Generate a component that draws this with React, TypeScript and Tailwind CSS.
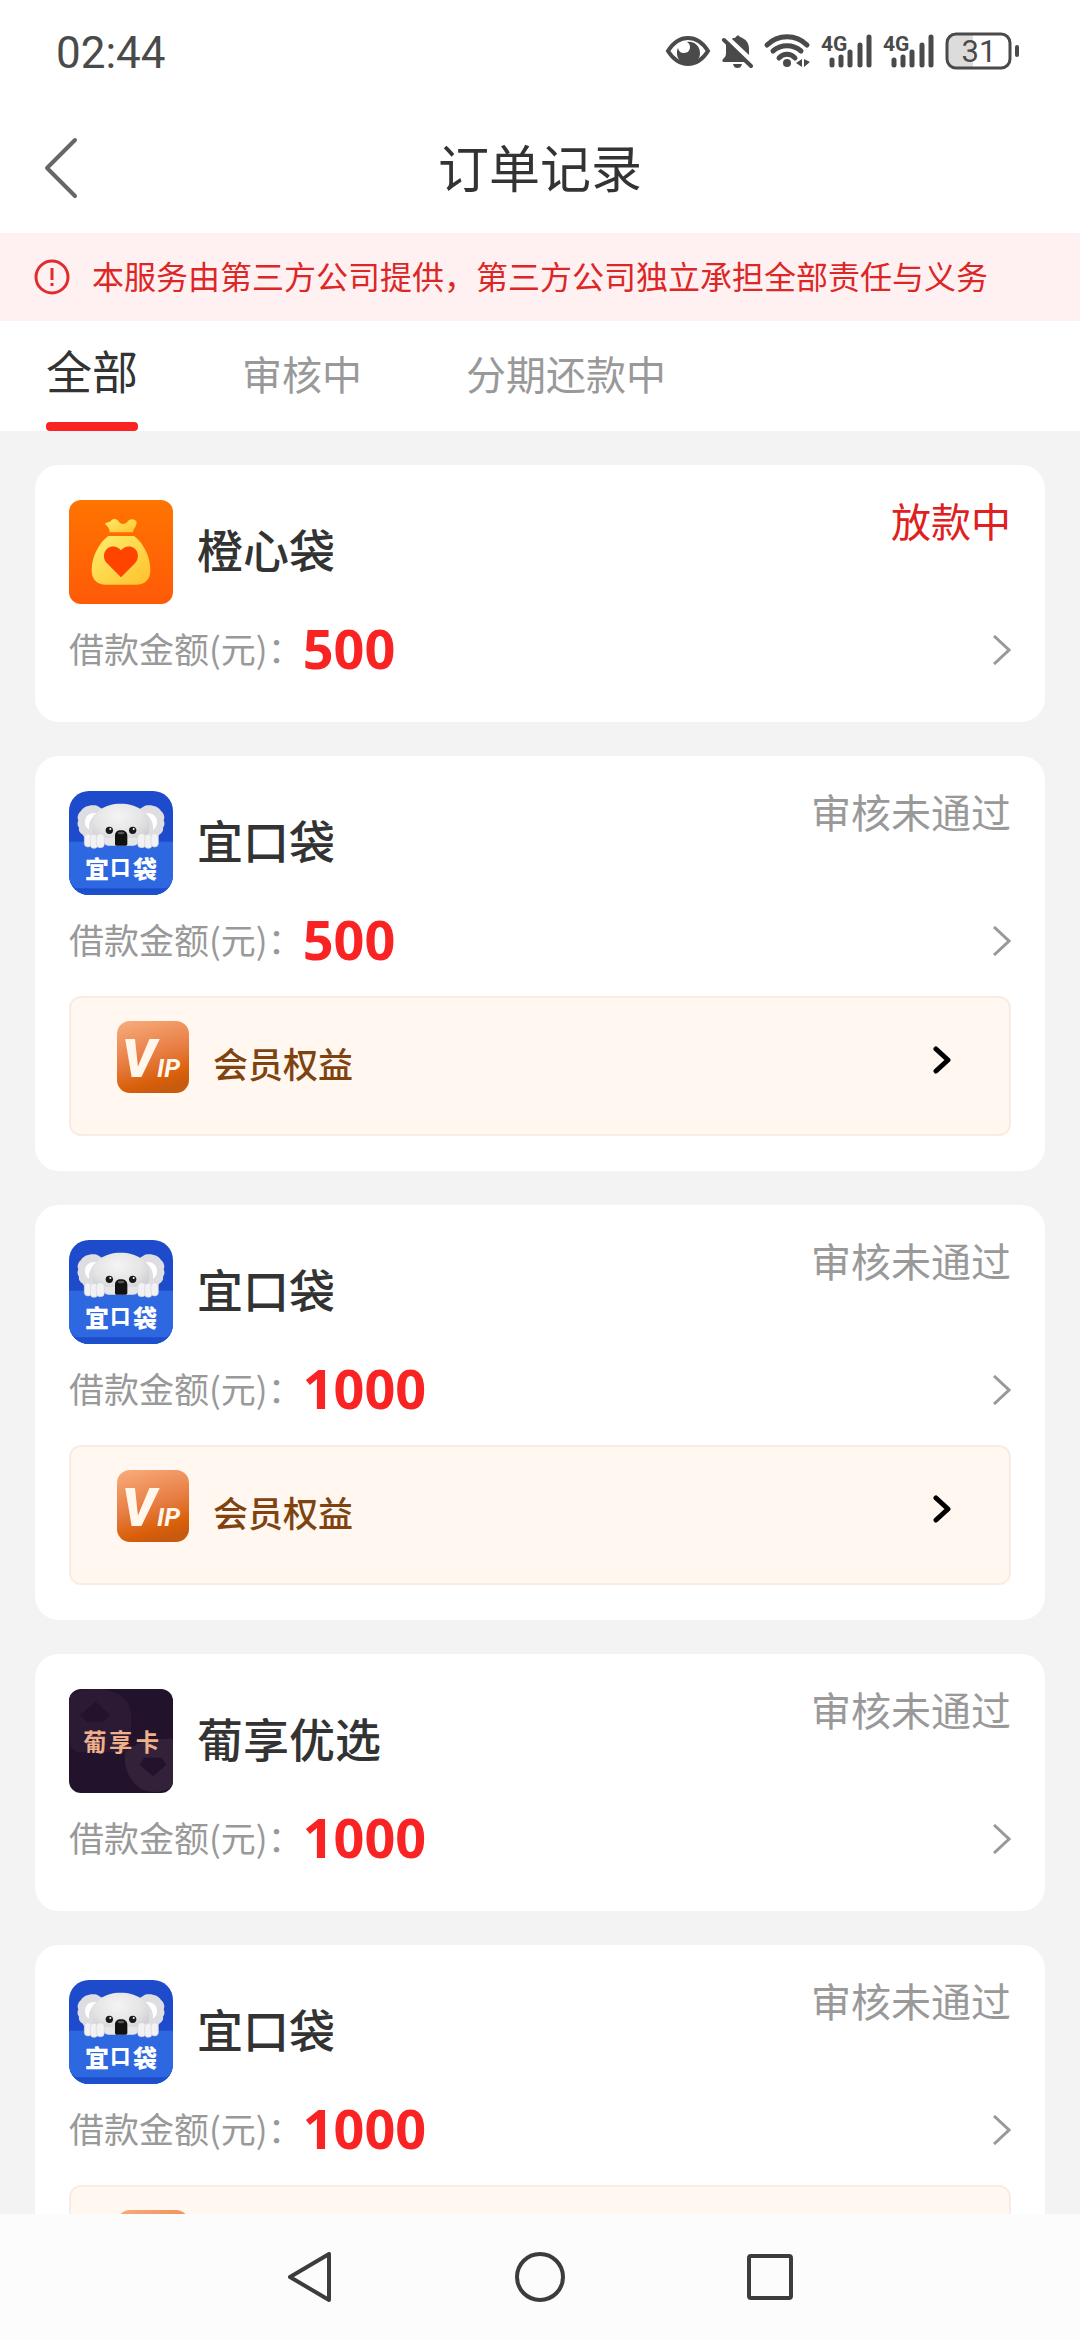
import { useState } from 'react';
import clsx from 'clsx';

type Order = {
  name: string;
  logo: 'bag' | 'koala' | 'card';
  amount: number;
  status: string;
  active?: boolean;
  vip?: boolean;
};

const tabs = ['全部', '审核中', '分期还款中'];

const orders: Order[] = [
  { name: '橙心袋', logo: 'bag', amount: 500, status: '放款中', active: true },
  { name: '宜口袋', logo: 'koala', amount: 500, status: '审核未通过', vip: true },
  { name: '宜口袋', logo: 'koala', amount: 1000, status: '审核未通过', vip: true },
  { name: '葡享优选', logo: 'card', amount: 1000, status: '审核未通过' },
  { name: '宜口袋', logo: 'koala', amount: 1000, status: '审核未通过', vip: true },
];

const SignalIcon = () => (
  <svg viewBox="0 0 52 38" className="w-[52px] h-[38px]" fill="none" stroke="#4a4a4a">
    <text x="0" y="19" fontSize="21" fontWeight="700" fill="#4a4a4a" stroke="none" fontFamily="Roboto, sans-serif">4G</text>
    <path d="M11 28v5M20 25v8M29 20v13M39 13v20M48 5v28" strokeWidth="5" strokeLinecap="round" />
  </svg>
);

const StatusBar = () => (
  <div className="flex h-[102px] shrink-0 items-center justify-between px-[60px] pl-14 text-[#4a4a4a]">
    <span className="pt-1 font-['Roboto',sans-serif] text-[44px] leading-none">02:44</span>
    <div className="flex items-center gap-[10px]">
      <svg viewBox="0 0 46 38" className="w-[46px] h-[38px]">
        <path d="M3 19C8 11 15 6 23 6s15 5 20 13c-5 8-12 13-20 13S8 27 3 19Z" fill="none" stroke="#4a4a4a" strokeWidth="4" />
        <path d="M22 10c7-1 13 4 13 11s-5 11-12 11-11-5-11-11c0-2 0-3 1-5 1 4 3 5 6 5 4 0 6-3 6-6 0-2-1-4-3-5Z" fill="#4a4a4a" />
      </svg>
      <svg viewBox="0 0 32 38" className="w-[32px] h-[38px]" fill="#4a4a4a">
        <path d="M12 6c1 0 2 0 3-1 1-2 3-2 4 0 6 2 9 6 9 12v6L11 7Z" />
        <path d="M5 11 24 30H3c-2 0-2-2-1-3 2-2 3-3 3-6Z" />
        <path d="M12 32h9c-1 3-2 4-4.500 4S13 35 12 32Z" />
        <path d="m3 8 27 26" stroke="#4a4a4a" strokeWidth="4" strokeLinecap="round" />
      </svg>
      <svg viewBox="0 0 48 38" className="w-[48px] h-[38px]" fill="none" stroke="#4a4a4a" strokeWidth="5" strokeLinecap="round">
        <path d="M4 13C15 2 33 2 44 13M10 19c8-7 20-7 28 0M16 26c4-5 12-5 16 0" />
        <circle cx="24" cy="31" r="4" fill="#4a4a4a" stroke="none" />
        <path d="M39 27v8l-6-4ZM41 27v8l6-5Z" fill="#4a4a4a" stroke="none" />
      </svg>
      <SignalIcon />
      <SignalIcon />
      <svg viewBox="0 0 75 38" className="w-[75px] h-[38px]">
        <path d="M11 2h17v34H11c-6 0-9-3-9-8V10c0-5 3-8 9-8Z" fill="#dcdcdc" />
        <rect x="2" y="2" width="63" height="34" rx="9" fill="none" stroke="#4a4a4a" strokeWidth="3" />
        <rect x="70" y="13" width="4" height="12" rx="2" fill="#4a4a4a" />
        <text x="34" y="30" fontSize="31" textAnchor="middle" fill="#4a4a4a" fontFamily="Roboto, sans-serif">31</text>
      </svg>
    </div>
  </div>
);

const BagLogo = () => (
  <svg viewBox="0 0 312 312" className="size-[104px] rounded-[12px]">
    <defs>
      <linearGradient id="bagBg" x1="0" y1="0" x2="0" y2="1">
        <stop offset="0" stopColor="#ff7400" />
        <stop offset="1" stopColor="#ff5a08" />
      </linearGradient>
      <linearGradient id="bagFill" x1="0" y1="0" x2="1" y2="1">
        <stop offset="0" stopColor="#ffee6e" />
        <stop offset="1" stopColor="#ffc02a" />
      </linearGradient>
    </defs>
    <rect width="312" height="312" fill="url(#bagBg)" />
    <path d="M122 97c0-12-6-18-14-25 6-7 16-4 20-12 6-5 18-3 22 6 6 8 18 8 25 0 5-10 21-11 27-2 4 12-8 20-10 33Z" fill="url(#bagFill)" />
    <path d="M118 108h77c30 22 49 64 49 102 0 30-16 44-44 44h-88c-28 0-44-14-44-44 0-38 20-80 50-102Z" fill="url(#bagFill)" />
    <path d="m156 232-42-42c-14-14-11-35 2-45 13-9 30-6 40 6 10-12 27-15 40-6 13 10 15 31 2 45Z" fill="#ff4400" />
  </svg>
);

const KoalaLogo = () => (
  <svg viewBox="0 0 312 312" className="size-[104px] rounded-[20px]">
    <defs>
      <radialGradient id="koalaHead" cx=".45" cy=".3" r=".7">
        <stop offset="0" stopColor="#f4f4f4" />
        <stop offset=".6" stopColor="#e4e4e4" />
        <stop offset="1" stopColor="#cbcbcf" />
      </radialGradient>
    </defs>
    <rect width="312" height="312" fill="#1d4bcb" />
    <path d="M84 44c-22-4-42 4-48 16-10 8-12 20-8 28-4 8-3 16 2 22-2 10 4 16 10 20 4 10 16 16 26 14l40-8V58Z" fill="#dedee2" />
    <path d="M228 44c22-4 42 4 48 16 10 8 12 20 8 28 4 8 3 16-2 22 2 10-4 16-10 20-4 10-16 16-26 14l-40-8V58Z" fill="#dedee2" />
    <path d="M82 66c-18-2-34 8-34 26 0 12 4 18 12 24-2-22 8-36 22-50ZM230 66c18-2 34 8 34 26 0 12-4 18-12 24 2-22-8-36-22-50Z" fill="#fff" />
    <path d="M155 38c48 0 84 24 86 62 1 26-8 46-20 64H90c-12-18-21-38-20-64 2-38 37-62 85-62Z" fill="url(#koalaHead)" />
    <rect y="152" width="312" height="140" fill="#2d68e0" />
    <path d="M0 262c6 24 20 36 48 36h216c28 0 42-12 48-36v50H0Z" fill="#1c50cc" />
    <path d="M104 140h104v10c0 8-6 14-14 14h-76c-8 0-14-6-14-14Z" fill="#e6e6e9" />
    <g fill="#f2f2f4" stroke="#d4d4da" strokeWidth="2">
      <rect x="46" y="128" width="22" height="40" rx="11" />
      <rect x="64" y="130" width="22" height="42" rx="11" />
      <rect x="82" y="128" width="24" height="42" rx="11" />
      <rect x="206" y="128" width="24" height="42" rx="11" />
      <rect x="227" y="130" width="22" height="42" rx="11" />
      <rect x="246" y="128" width="22" height="40" rx="11" />
    </g>
    <circle cx="121" cy="118" r="11" fill="#1a1a1a" />
    <circle cx="191" cy="118" r="11" fill="#1a1a1a" />
    <circle cx="124" cy="114" r="3" fill="#fff" />
    <circle cx="194" cy="114" r="3" fill="#fff" />
    <path d="M138 134c0-10 6-16 18-16s19 6 19 16v24c0 4-3 6-6 6h-25c-4 0-6-2-6-6Z" fill="#111" />
    <ellipse cx="156" cy="126" rx="10" ry="4" fill="#555" />
    <g fill="#fff" fontFamily="'Noto Sans CJK SC', sans-serif" fontWeight="900">
      <text x="48" y="260" fontSize="72">宜</text>
      <text x="124" y="252" fontSize="60">口</text>
      <text x="192" y="260" fontSize="72">袋</text>
    </g>
  </svg>
);

const CardLogo = () => (
  <svg viewBox="0 0 312 312" className="size-[104px] rounded-[12px]">
    <rect width="312" height="312" fill="#22122b" />
    <path d="M0 20C60-14 150-10 180 50c14 36 6 90-10 140H30C10 186 2 170 0 150Z" fill="#2c1a34" />
    <path d="m80 38 42 40-20 20H54L34 78Z" fill="#22122b" />
    <path d="M312 150v140c-30 22-70 26-100 6-34-24-48-60-44-106 30-30 90-44 144-40Z" fill="#33213a" />
    <path d="m252 262-40-34 14-22h52l14 22Z" fill="#22122b" />
    <g fill="#efb08c" fontFamily="'Noto Sans CJK SC', sans-serif" fontWeight="700" fontSize="70">
      <text x="43" y="186">葡</text>
      <text x="120" y="186">享</text>
      <text x="200" y="186">卡</text>
    </g>
  </svg>
);

const VipLogo = () => (
  <svg viewBox="0 0 216 216" className="size-[72px] rounded-[13px]">
    <defs>
      <linearGradient id="vipBg" x1=".2" y1="0" x2=".5" y2="1">
        <stop offset="0" stopColor="#f7a878" />
        <stop offset=".5" stopColor="#e87f45" />
        <stop offset=".85" stopColor="#d95f0a" />
        <stop offset="1" stopColor="#c85a10" />
      </linearGradient>
    </defs>
    <rect width="216" height="216" fill="url(#vipBg)" />
    <g fill="#fff6ec" fontFamily="Roboto, sans-serif" fontStyle="italic">
      <text x="14" y="168" fontSize="160" fontWeight="900">V</text>
      <text x="120" y="168" fontSize="76" fontWeight="700">IP</text>
    </g>
  </svg>
);

const logos = { bag: BagLogo, koala: KoalaLogo, card: CardLogo };

const OrderCard = ({ order }: { order: Order }) => {
  const Logo = logos[order.logo];
  return (
    <article className="shrink-0 rounded-[24px] bg-white px-[34px] py-[35px]">
      <div className="flex items-start justify-between">
        <div className="flex items-start gap-6">
          <Logo />
          <h2 className="pt-5 text-[46px] leading-[56px] font-medium text-[#333]">{order.name}</h2>
        </div>
        <span className={clsx('text-[40px] leading-[40px]', order.active ? 'text-[#e02020]' : 'text-[#999]')}>
          {order.status}
        </span>
      </div>
      <button type="button" className="flex h-[83px] w-full items-center justify-between pt-2">
        <span className="flex items-center pb-1">
          <span className="text-[35px] leading-[52px] text-[#999]">借款金额(元)：</span>
          <span className="font-['Noto_Sans',sans-serif] text-[54px] leading-[52px] font-bold text-[#fa2323]">{order.amount}</span>
        </span>
        <svg viewBox="0 0 18 30" className="w-[18px] h-[30px]" fill="none" stroke="#999" strokeWidth="3">
          <path d="m1 1 15 14L1 29" />
        </svg>
      </button>
      {order.vip && (
        <button
          type="button"
          className="mt-[18px] flex h-[140px] w-full items-start justify-between rounded-[12px] border-2 border-[#faece2] bg-[#fff7f0] pt-[23px] pr-[58px] pl-[46px]"
        >
          <span className="flex items-end gap-6">
            <VipLogo />
            <span className="text-[35px] leading-[60px] font-medium text-[#7f4310]">会员权益</span>
          </span>
          <svg viewBox="0 0 18 76" className="h-[76px] w-[18px]" fill="none" stroke="#000" strokeWidth="5" strokeLinecap="round" strokeLinejoin="round">
            <path d="m3 28 12 11L3 50" />
          </svg>
        </button>
      )}
    </article>
  );
};

const NavBar = () => (
  <nav className="flex h-[126px] shrink-0 items-center justify-center gap-[180px] bg-[#fcfcfc]">
    <button type="button" aria-label="返回">
      <svg viewBox="0 0 50 50" className="size-[50px]" fill="none" stroke="#3c3c3c" strokeWidth="4" strokeLinejoin="round">
        <path d="M44 2v46L5 25Z" />
      </svg>
    </button>
    <button type="button" aria-label="主页">
      <svg viewBox="0 0 50 50" className="size-[50px]" fill="none" stroke="#3c3c3c" strokeWidth="4">
        <circle cx="25" cy="25" r="23" />
      </svg>
    </button>
    <button type="button" aria-label="最近任务">
      <svg viewBox="0 0 50 50" className="size-[50px]" fill="none" stroke="#3c3c3c" strokeWidth="4">
        <rect x="4" y="4" width="42" height="42" rx="2" />
      </svg>
    </button>
  </nav>
);

export default function App() {
  const [tab, setTab] = useState(0);

  return (
    <div className="flex h-screen flex-col overflow-hidden bg-white font-['Noto_Sans_CJK_SC',sans-serif]">
      <StatusBar />

      <header className="grid h-[131px] shrink-0 grid-cols-[1fr_auto_1fr] items-center px-11">
        <button type="button" aria-label="返回上一页" className="justify-self-start">
          <svg viewBox="0 0 34 62" className="h-[62px] w-[34px]" fill="none" stroke="#666" strokeWidth="4" strokeLinecap="round" strokeLinejoin="round">
            <path d="M31 3 3 31l28 28" />
          </svg>
        </button>
        <h1 className="pb-1 text-[51px] leading-[60px] text-[#333]">订单记录</h1>
      </header>

      <div className="flex h-[88px] shrink-0 items-center gap-[22px] bg-[#fff1f1] px-[34px] text-[#dd2626]">
        <svg viewBox="0 0 36 36" className="size-[36px]" fill="none" stroke="#e02c2c" strokeWidth="3">
          <circle cx="18" cy="18" r="16" />
          <path d="M18 9v12M18 24v3" />
        </svg>
        <p className="pb-1 text-[32px] leading-[44px] whitespace-nowrap">本服务由第三方公司提供，第三方公司独立承担全部责任与义务</p>
      </div>

      <div role="tablist" className="flex h-[110px] shrink-0 gap-[104px] px-[46px]">
        {tabs.map((label, i) => (
          <button
            key={label}
            type="button"
            role="tab"
            aria-selected={i === tab}
            onClick={() => setTab(i)}
            className={clsx(
              'flex flex-col items-center justify-between',
              i === tab ? 'pt-[18px] text-[46px] text-[#333]' : 'pt-[22px] text-[40px] text-[#999]'
            )}
          >
            <span className="leading-[60px]">{label}</span>
            {i === tab && <span className="h-[9px] w-full rounded-[4px] bg-[#fa2323]" />}
          </button>
        ))}
      </div>

      <main className="flex min-h-0 flex-1 flex-col gap-[34px] overflow-y-auto bg-[#f3f3f3] px-[35px] py-[34px] [scrollbar-width:none]">
        {orders.map((order, i) => (
          <OrderCard key={i} order={order} />
        ))}
      </main>

      <NavBar />
    </div>
  );
}
